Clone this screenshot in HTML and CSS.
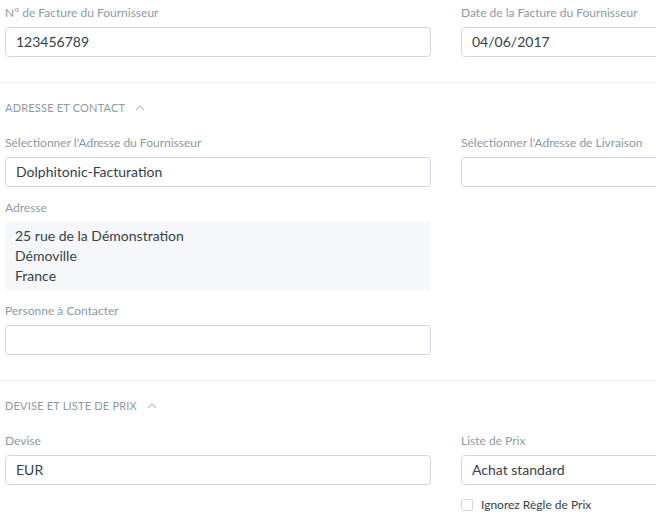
FILE: index.html
```html
<!DOCTYPE html>
<html lang="fr">
<head>
<meta charset="utf-8">
<title>Facture Fournisseur</title>
<link rel="stylesheet" href="styles.css">
</head>
<body>
<div class="form">
  <section class="section first">
    <div class="row">
      <div class="col">
        <div class="field">
          <div class="label">N° de Facture du Fournisseur</div>
          <div class="input">123456789</div>
        </div>
      </div>
      <div class="col">
        <div class="field">
          <div class="label">Date de la Facture du Fournisseur</div>
          <div class="input">04/06/2017</div>
        </div>
      </div>
    </div>
  </section>

  <section class="section">
    <div class="section-head">ADRESSE ET CONTACT
      <svg class="chev" width="10" height="6" viewBox="0 0 10 6"><path d="M1 5 L5 1 L9 5" fill="none" stroke="currentColor" stroke-width="1.6"/></svg>
    </div>
    <div class="row">
      <div class="col">
        <div class="field">
          <div class="label">Sélectionner l'Adresse du Fournisseur</div>
          <div class="input">Dolphitonic-Facturation</div>
        </div>
        <div class="field field-static">
          <div class="label">Adresse</div>
          <div class="static">25 rue de la Démonstration<br>Démoville<br>France</div>
        </div>
        <div class="field">
          <div class="label">Personne à Contacter</div>
          <div class="input"></div>
        </div>
      </div>
      <div class="col">
        <div class="field">
          <div class="label">Sélectionner l'Adresse de Livraison</div>
          <div class="input"></div>
        </div>
      </div>
    </div>
  </section>

  <section class="section">
    <div class="section-head">DEVISE ET LISTE DE PRIX
      <svg class="chev" width="10" height="6" viewBox="0 0 10 6"><path d="M1 5 L5 1 L9 5" fill="none" stroke="currentColor" stroke-width="1.6"/></svg>
    </div>
    <div class="row">
      <div class="col">
        <div class="field">
          <div class="label">Devise</div>
          <div class="input">EUR</div>
        </div>
      </div>
      <div class="col">
        <div class="field">
          <div class="label">Liste de Prix</div>
          <div class="input">Achat standard</div>
        </div>
        <div class="check">
          <span class="box"></span>
          <span class="check-label">Ignorez Règle de Prix</span>
        </div>
      </div>
    </div>
  </section>
</div>
</body>
</html>
```

FILE: styles.css
```css
html, body {
  margin: 0;
  padding: 0;
  background: #ffffff;
  overflow: hidden;
}
body {
  font-family: "Lato", "Noto Sans", sans-serif;
  color: #36414c;
  width: 656px;
  height: 516px;
}
.form {
  width: 900px;
}
.section {
  border-top: 1px solid #ebeff2;
  padding: 16px 0 25px 5px;
}
.section.first {
  border-top: none;
  padding-top: 4px;
}
.section-head {
  font-size: 11px;
  line-height: 18px;
  color: #8d99a6;
  letter-spacing: 0.2px;
  display: flex;
  align-items: center;
  gap: 10px;
  margin-bottom: 17px;
}
.chev {
  color: #c8d0d8;
}
.row {
  display: flex;
  gap: 30px;
}
.col {
  width: 426px;
  display: flex;
  flex-direction: column;
  gap: 12px;
}
.label {
  font-size: 12px;
  line-height: 18px;
  color: #8d99a6;
  margin-bottom: 5px;
}
.field-static {
  margin-bottom: -1px;
}
.field-static .label {
  margin-bottom: 4px;
}
.input {
  box-sizing: border-box;
  height: 30px;
  border: 1px solid #d1d8dd;
  border-radius: 4px;
  padding: 0 10px;
  font-size: 14px;
  line-height: 28px;
  color: #36414c;
}
.static {
  background: #f5f7fa;
  border-radius: 4px;
  padding: 5px 10px;
  font-size: 14px;
  line-height: 20px;
  color: #36414c;
}
.check {
  display: flex;
  align-items: center;
  gap: 8px;
  margin-top: -1px;
}
.box {
  box-sizing: border-box;
  width: 12px;
  height: 12px;
  border: 1px solid #d1d8dd;
  border-radius: 2px;
}
.check-label {
  font-size: 12px;
  line-height: 18px;
  color: #36414c;
}
```
